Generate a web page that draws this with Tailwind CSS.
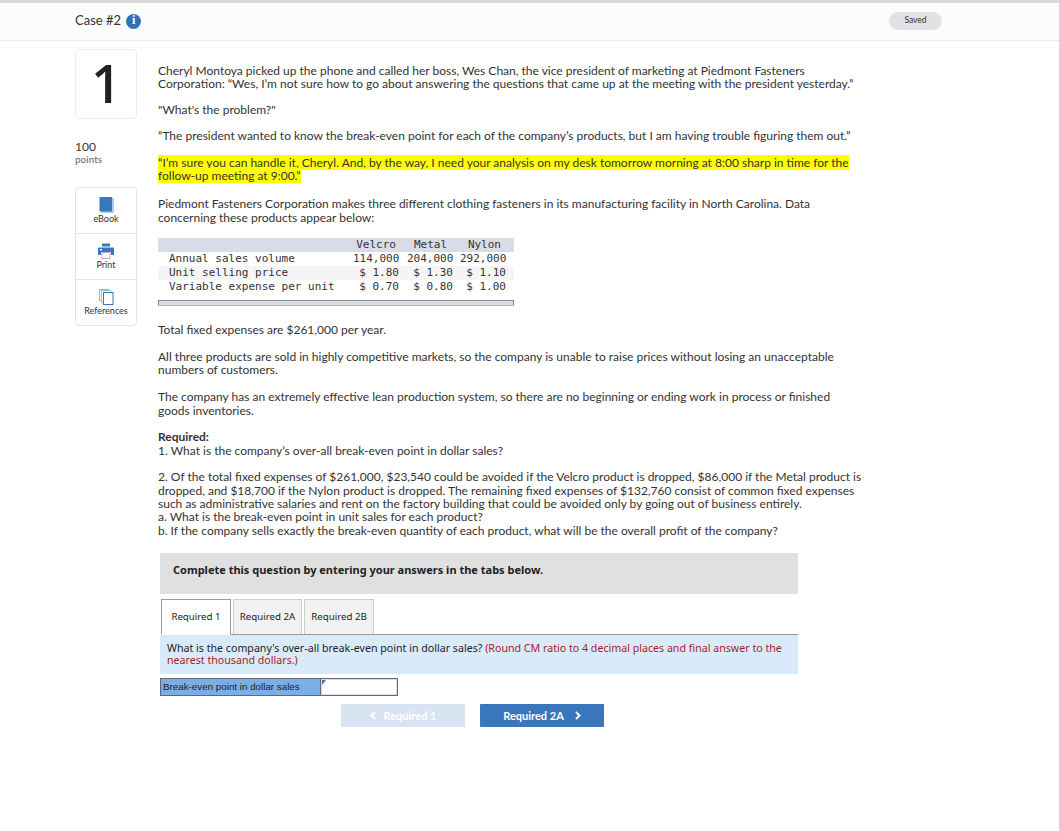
<!DOCTYPE html>
<html lang="en">
<head>
  <meta charset="UTF-8">
  <title>Case #2</title>
  <script src="https://cdn.jsdelivr.net/npm/@tailwindcss/browser@4"></script>
</head>
<body class="bg-white text-[#333] font-['Lato','Open_Sans',sans-serif] text-[12px] leading-[13.3px] h-[831px] overflow-hidden">
  <div class="h-[3px] bg-[#d9d9d9]"></div>
  <div class="h-[38px] pb-[1px] bg-[#fcfcfc] border-b border-[#ececec] flex items-center justify-between pl-[75px] pr-[117px]">
    <div class="flex items-center gap-[5px] text-[13px]">
      <span>Case #2</span>
      <span class="w-[15px] h-[15px] rounded-full bg-[#2f74b8] text-white flex items-center justify-center text-[12px] font-black font-['Liberation_Serif']">i</span>
    </div>
    <span class="w-[53px] h-[18px] rounded-full bg-[#e2e1e4] text-[8.5px] flex items-center justify-center">Saved</span>
  </div>

  <div class="flex pl-[75px] pt-[8px]">
    <div class="w-[62px] shrink-0">
      <div class="h-[70px] pb-[3px] border border-[#ececec] rounded-[4px] flex items-center justify-center text-[52px] font-['Open_Sans'] font-semibold text-[#222]">1</div>
      <div class="mt-[21px] text-[12px] leading-[13px]">100</div>
      <div class="text-[10px] leading-[13px] text-[#666]">points</div>
      <div class="mt-[21px] border border-[#e5e5e5] rounded-[4px] text-[9px] leading-[11px] text-center">
        <div class="h-[46px] border-b border-[#e5e5e5] flex flex-col items-center pt-[9px]">
          <svg width="15" height="16" viewBox="0 0 15 16"><rect x="2" y="1" width="13" height="15" fill="#a9cdf2"/><rect x="0.5" y="0" width="12.5" height="14.5" fill="#3a76bb"/></svg>eBook
        </div>
        <div class="h-[46px] border-b border-[#e5e5e5] flex flex-col items-center pt-[9px]">
          <svg width="16" height="16" viewBox="0 0 16 16"><rect x="4" y="0.5" width="8" height="3" fill="#3a76bb"/><path d="M0 5.5a1 1 0 0 1 1-1h14a1 1 0 0 1 1 1V12h-3V9H3v3H0z" fill="#3a76bb"/><rect x="2" y="6" width="2" height="1.5" fill="#fff"/><rect x="4" y="9.5" width="8" height="6" fill="#fff" stroke="#c9a8c4"/></svg>Print
        </div>
        <div class="h-[45px] flex flex-col items-center pt-[9px]">
          <svg width="15" height="16" viewBox="0 0 15 16" fill="#fff"><rect x="0.5" y="0.5" width="9" height="11" stroke="#8fb4d8"/><rect x="2.5" y="1.5" width="9" height="12" stroke="#8fd0c4"/><rect x="4.5" y="3.5" width="9.5" height="12" stroke="#3a76bb"/></svg>References
        </div>
      </div>
    </div>

    <div class="ml-[21px] w-[705px] pt-[14.5px]">
      <p>Cheryl Montoya picked up the phone and called her boss, Wes Chan, the vice president of marketing at Piedmont Fasteners<br>Corporation: “Wes, I’m not sure how to go about answering the questions that came up at the meeting with the president yesterday.”</p>
      <p class="mt-[13px]">"What's the problem?"</p>
      <p class="mt-[13px]">“The president wanted to know the break-even point for each of the company’s products, but I am having trouble figuring them out.”</p>
      <p class="mt-[13px]"><span class="bg-[#ffff00]">“I’m sure you can handle it, Cheryl. And, by the way, I need your analysis on my desk tomorrow morning at 8:00 sharp in time for the<br>follow-up meeting at 9:00.”</span></p>
      <p class="mt-[15px]">Piedmont Fasteners Corporation makes three different clothing fasteners in its manufacturing facility in North Carolina. Data<br>concerning these products appear below:</p>

      <div class="mt-[14px] w-[356px] font-['DejaVu_Sans_Mono','Liberation_Mono',monospace] text-[11px] leading-[14px] text-[#333]">
        <div class="bg-[#d9dce6] flex h-[14px]"><span class="ml-[198px] w-[40px] text-right">Velcro</span><span class="ml-[18px] w-[33px] text-right">Metal</span><span class="ml-[20px] w-[34px] text-right">Nylon</span></div>
        <div class="flex h-[14px] pl-[11px]"><span class="w-[184px]">Annual sales volume</span><span class="w-[46px] text-right">114,000</span><span class="ml-[8px] w-[46px] text-right">204,000</span><span class="ml-[7px] w-[46px] text-right">292,000</span></div>
        <div class="flex h-[14px] pl-[11px] bg-[#f5f5f5]"><span class="w-[184px]">Unit selling price</span><span class="w-[46px] text-right">$ 1.80</span><span class="ml-[8px] w-[46px] text-right">$ 1.30</span><span class="ml-[7px] w-[46px] text-right">$ 1.10</span></div>
        <div class="flex h-[14px] pl-[11px]"><span class="w-[184px]">Variable expense per unit</span><span class="w-[46px] text-right">$ 0.70</span><span class="ml-[8px] w-[46px] text-right">$ 0.80</span><span class="ml-[7px] w-[46px] text-right">$ 1.00</span></div>
        <div class="mt-[6px] h-[6px] bg-[#d9dce6] border border-[#8a8a8a] border-b-[#b5b5b5]"></div>
      </div>

      <p class="mt-[17.5px]">Total fixed expenses are $261,000 per year.</p>
      <p class="mt-[13.5px]">All three products are sold in highly competitive markets, so the company is unable to raise prices without losing an unacceptable<br>numbers of customers.</p>
      <p class="mt-[13.5px]">The company has an extremely effective lean production system, so there are no beginning or ending work in process or finished<br>goods inventories.</p>
      <p class="mt-[13.5px]"><b>Required:</b><br>1. What is the company’s over-all break-even point in dollar sales?</p>
      <p class="mt-[13.5px]">2. Of the total fixed expenses of $261,000, $23,540 could be avoided if the Velcro product is dropped, $86,000 if the Metal product is<br>dropped, and $18,700 if the Nylon product is dropped. The remaining fixed expenses of $132,760 consist of common fixed expenses<br>such as administrative salaries and rent on the factory building that could be avoided only by going out of business entirely.<br>a. What is the break-even point in unit sales for each product?<br>b. If the company sells exactly the break-even quantity of each product, what will be the overall profit of the company?</p>

      <div class="mt-[16px] ml-[2px] w-[638px] h-[41px] pb-[7px] bg-[#e0e0e0] flex items-center pl-[13px] font-['Noto_Sans'] font-bold text-[11px] text-[#222]">Complete this question by entering your answers in the tabs below.</div>

      <div class="mt-[5px] ml-[3px] w-[637px] flex gap-[2px] items-end font-['Noto_Sans'] text-[9.7px] border-b border-[#999] h-[36px] text-[#222]">
        <div class="w-[70px] h-[36px] bg-white border border-[#999] border-b-white -mb-px flex items-center justify-center">Required 1</div>
        <div class="w-[69px] h-[35px] bg-[#f2f2f2] border border-[#ccc] border-b-0 flex items-center justify-center">Required 2A</div>
        <div class="w-[70px] h-[35px] bg-[#f2f2f2] border border-[#ccc] border-b-0 flex items-center justify-center">Required 2B</div>
      </div>
      <div class="ml-[2px] w-[638px] h-[39px] bg-[#d9ebfa] pl-[7px] pt-[7px] font-['Noto_Sans'] text-[10.65px] leading-[12px] text-[#222]">What is the company's over-all break-even point in dollar sales? <span class="text-[#a81c22]">(Round CM ratio to 4 decimal places and final answer to the<br>nearest thousand dollars.)</span></div>
      <div class="mt-[4px] ml-[2px] flex w-[238px] h-[18px] border border-[#667] font-['Liberation_Sans'] text-[9.8px] text-[#222]">
        <div class="w-[160px] bg-[#7aaee8] pl-[2px] leading-[15px] border-r border-[#667]">Break-even point in dollar sales</div>
        <div class="relative flex-1 bg-white border border-[#cfe0f2]">
          <span class="absolute left-0 top-0 border-t-[5px] border-r-[4px] border-t-[#3a76bb] border-r-transparent"></span>
        </div>
      </div>
      <div class="mt-[8px] ml-[183px] flex gap-[15px] text-[11px] font-bold">
        <div class="w-[124px] h-[23px] bg-[#d8e4f1] text-white flex items-center justify-center gap-[8px] rounded-[1px]">
          <svg width="6" height="9" viewBox="0 0 6 9" fill="none" stroke="#fff" stroke-width="2"><path d="M5 1 1.5 4.5 5 8"/></svg>Required 1
        </div>
        <div class="w-[124px] h-[23px] bg-[#3a76bb] text-white flex items-center justify-center gap-[11px] rounded-[1px]">
          Required 2A
          <svg width="6" height="9" viewBox="0 0 6 9" fill="none" stroke="#fff" stroke-width="2"><path d="M1 1 4.5 4.5 1 8"/></svg>
        </div>
      </div>
    </div>
  </div>
</body>
</html>
